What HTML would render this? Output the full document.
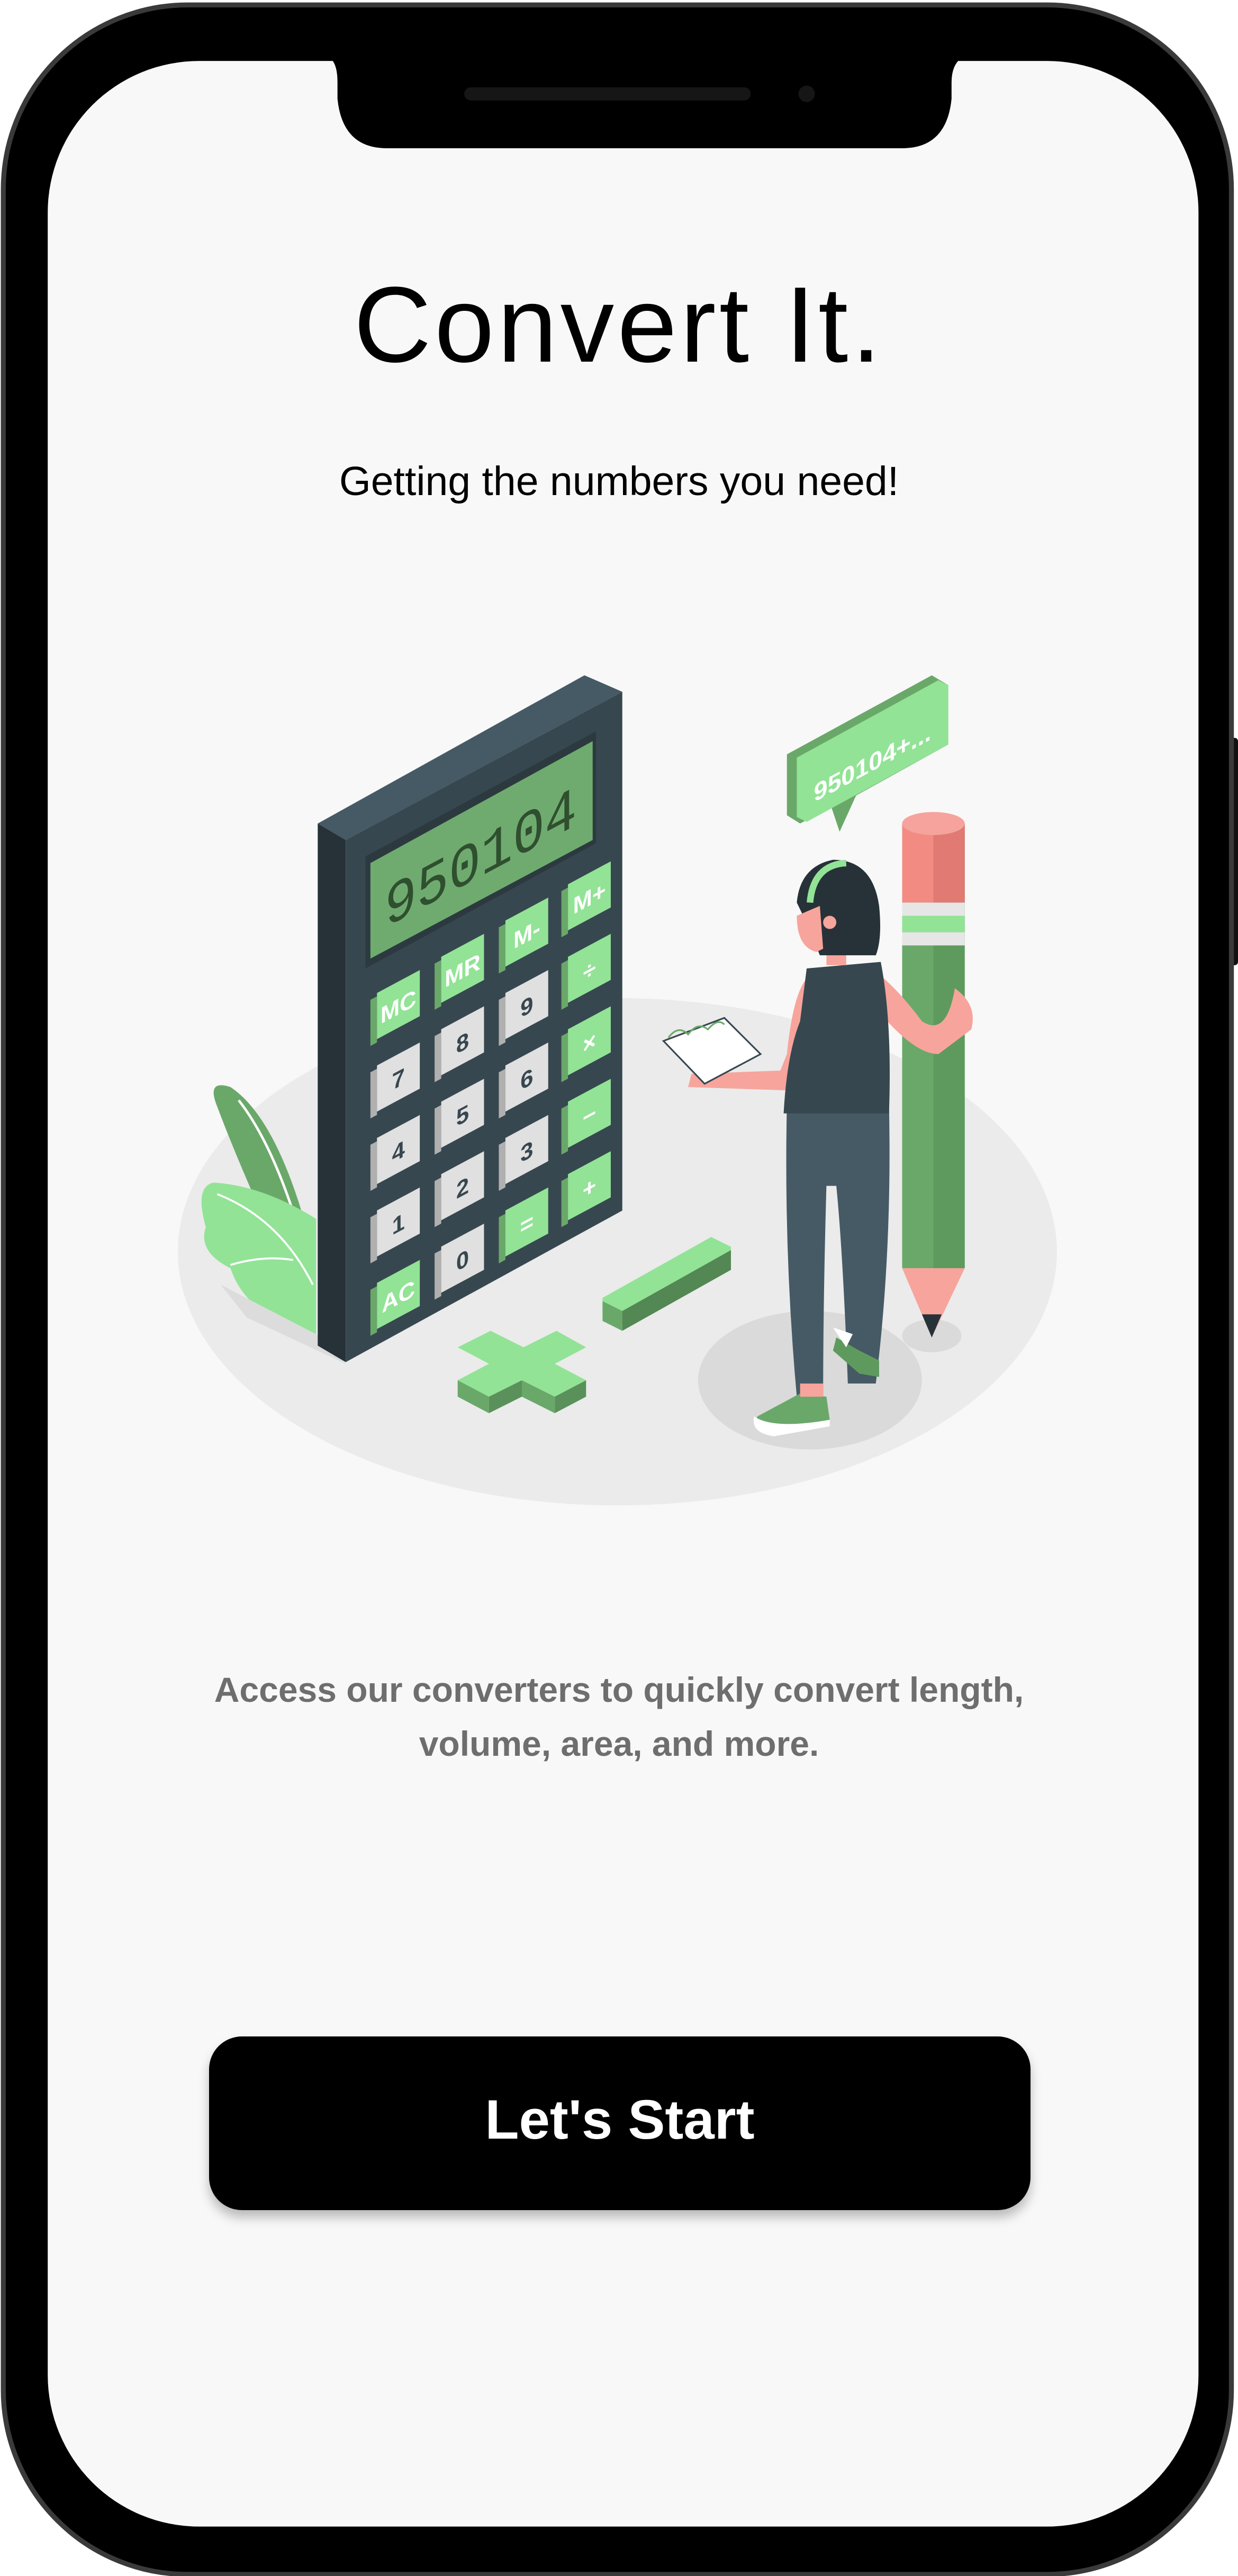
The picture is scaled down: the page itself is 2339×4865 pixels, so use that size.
<!DOCTYPE html>
<html><head><meta charset="utf-8"><style>
html,body{margin:0;padding:0;background:#fff;}
body{width:2339px;height:4865px;position:relative;overflow:hidden;font-family:"Liberation Sans",sans-serif;}
svg.bg{position:absolute;left:0;top:0;width:2339px;height:4865px;}
.t{position:absolute;left:0;width:2339px;text-align:center;line-height:1;white-space:nowrap;}
.btn{position:absolute;left:395px;top:3846px;width:1552px;height:328px;background:#000;border-radius:62px;box-shadow:0 14px 20px rgba(0,0,0,0.25);color:#fff;font-weight:bold;font-size:105px;text-align:center;line-height:316px;}
</style></head><body>
<svg class="bg" viewBox="0 0 752 1564" preserveAspectRatio="none" xmlns="http://www.w3.org/2000/svg">
  <rect x="746" y="448" width="6" height="138" rx="2" fill="#111"/>
  <rect x="2" y="3" width="746" height="1560" rx="112" fill="#000" stroke="#3a3a3a" stroke-width="3"/>
  <rect x="29" y="37" width="699" height="1497" rx="92" fill="#f8f8f8"/>
  <path d="M198 34 Q205 36 205 50 L205 60 Q208 90 235 90 L548 90 Q575 90 578 60 L578 50 Q578 38 586 34 Z" fill="#000"/>
  <rect x="282" y="53" width="174" height="8" rx="4" fill="#161616"/>
  <circle cx="490" cy="57" r="5" fill="#161616"/>

  <ellipse cx="375" cy="760" rx="267" ry="154" fill="#ebebeb"/>
  <ellipse cx="492" cy="838" rx="68" ry="42" fill="#dadada"/>
  <ellipse cx="566" cy="811" rx="18" ry="10" fill="#dadada"/>

  <path d="M190 760 Q170 680 140 660 Q125 655 132 672 Q150 720 188 800 Z" fill="#6aa86a"/>
  <path d="M145 668 Q170 700 188 770" stroke="#fff" stroke-width="1.5" fill="none"/>
  <path d="M192 810 Q150 800 140 770 Q120 760 125 745 Q118 720 130 718 Q160 720 192 740 Z" fill="#92e396"/>
  <path d="M132 725 Q170 740 190 780 M140 768 Q160 762 178 765" stroke="#fff" stroke-width="1.2" fill="none"/>
  <polygon points="134,780 192,810 210,828 150,800" fill="#dcdcdc"/>

  <polygon points="193,500 355,410 378,420 210,510" fill="#455a64"/>
  <polygon points="193,500 210,510 210,827 193,817" fill="#263238"/>
  <polygon points="210,510 378,420 378,735 210,827" fill="#37474f"/>
  <polygon points="222,520 362,444 362,512 222,588" fill="#2c3a40"/>
  <polygon points="225,524 360,450 360,510 225,582" fill="#6fab6f"/>
  <g transform="translate(292,520) skewY(-28.2)">
    <text x="0" y="12" font-family="Liberation Mono,monospace" font-size="36" fill="#2f4f2f" text-anchor="middle" transform="scale(0.9,1)">950104</text>
  </g>
  <g font-family="Liberation Sans,sans-serif" font-weight="bold" font-size="14" text-anchor="middle">
  <g transform="translate(240,612) skewY(-28.2)"><rect x="-15" y="-13" width="4" height="28" fill="#6aa86a"/><rect x="-11" y="-15" width="26" height="28" fill="#92e396"/><text x="2" y="5" fill="#fff">MC</text></g>
  <g transform="translate(240,656) skewY(-28.2)"><rect x="-15" y="-13" width="4" height="28" fill="#b0b0b0"/><rect x="-11" y="-15" width="26" height="28" fill="#e0e0e0"/><text x="2" y="5" fill="#37474f">7</text></g>
  <g transform="translate(240,700) skewY(-28.2)"><rect x="-15" y="-13" width="4" height="28" fill="#b0b0b0"/><rect x="-11" y="-15" width="26" height="28" fill="#e0e0e0"/><text x="2" y="5" fill="#37474f">4</text></g>
  <g transform="translate(240,744) skewY(-28.2)"><rect x="-15" y="-13" width="4" height="28" fill="#b0b0b0"/><rect x="-11" y="-15" width="26" height="28" fill="#e0e0e0"/><text x="2" y="5" fill="#37474f">1</text></g>
  <g transform="translate(240,788) skewY(-28.2)"><rect x="-15" y="-13" width="4" height="28" fill="#6aa86a"/><rect x="-11" y="-15" width="26" height="28" fill="#92e396"/><text x="2" y="5" fill="#fff">AC</text></g>
  <g transform="translate(279,590) skewY(-28.2)"><rect x="-15" y="-13" width="4" height="28" fill="#6aa86a"/><rect x="-11" y="-15" width="26" height="28" fill="#92e396"/><text x="2" y="5" fill="#fff">MR</text></g>
  <g transform="translate(279,634) skewY(-28.2)"><rect x="-15" y="-13" width="4" height="28" fill="#b0b0b0"/><rect x="-11" y="-15" width="26" height="28" fill="#e0e0e0"/><text x="2" y="5" fill="#37474f">8</text></g>
  <g transform="translate(279,678) skewY(-28.2)"><rect x="-15" y="-13" width="4" height="28" fill="#b0b0b0"/><rect x="-11" y="-15" width="26" height="28" fill="#e0e0e0"/><text x="2" y="5" fill="#37474f">5</text></g>
  <g transform="translate(279,722) skewY(-28.2)"><rect x="-15" y="-13" width="4" height="28" fill="#b0b0b0"/><rect x="-11" y="-15" width="26" height="28" fill="#e0e0e0"/><text x="2" y="5" fill="#37474f">2</text></g>
  <g transform="translate(279,766) skewY(-28.2)"><rect x="-15" y="-13" width="4" height="28" fill="#b0b0b0"/><rect x="-11" y="-15" width="26" height="28" fill="#e0e0e0"/><text x="2" y="5" fill="#37474f">0</text></g>
  <g transform="translate(318,568) skewY(-28.2)"><rect x="-15" y="-13" width="4" height="28" fill="#6aa86a"/><rect x="-11" y="-15" width="26" height="28" fill="#92e396"/><text x="2" y="5" fill="#fff">M-</text></g>
  <g transform="translate(318,612) skewY(-28.2)"><rect x="-15" y="-13" width="4" height="28" fill="#b0b0b0"/><rect x="-11" y="-15" width="26" height="28" fill="#e0e0e0"/><text x="2" y="5" fill="#37474f">9</text></g>
  <g transform="translate(318,656) skewY(-28.2)"><rect x="-15" y="-13" width="4" height="28" fill="#b0b0b0"/><rect x="-11" y="-15" width="26" height="28" fill="#e0e0e0"/><text x="2" y="5" fill="#37474f">6</text></g>
  <g transform="translate(318,700) skewY(-28.2)"><rect x="-15" y="-13" width="4" height="28" fill="#b0b0b0"/><rect x="-11" y="-15" width="26" height="28" fill="#e0e0e0"/><text x="2" y="5" fill="#37474f">3</text></g>
  <g transform="translate(318,744) skewY(-28.2)"><rect x="-15" y="-13" width="4" height="28" fill="#6aa86a"/><rect x="-11" y="-15" width="26" height="28" fill="#92e396"/><text x="2" y="5" fill="#fff">=</text></g>
  <g transform="translate(356,546) skewY(-28.2)"><rect x="-15" y="-13" width="4" height="28" fill="#6aa86a"/><rect x="-11" y="-15" width="26" height="28" fill="#92e396"/><text x="2" y="5" fill="#fff">M+</text></g>
  <g transform="translate(356,590) skewY(-28.2)"><rect x="-15" y="-13" width="4" height="28" fill="#6aa86a"/><rect x="-11" y="-15" width="26" height="28" fill="#92e396"/><text x="2" y="5" fill="#fff">÷</text></g>
  <g transform="translate(356,634) skewY(-28.2)"><rect x="-15" y="-13" width="4" height="28" fill="#6aa86a"/><rect x="-11" y="-15" width="26" height="28" fill="#92e396"/><text x="2" y="5" fill="#fff">×</text></g>
  <g transform="translate(356,678) skewY(-28.2)"><rect x="-15" y="-13" width="4" height="28" fill="#6aa86a"/><rect x="-11" y="-15" width="26" height="28" fill="#92e396"/><text x="2" y="5" fill="#fff">−</text></g>
  <g transform="translate(356,722) skewY(-28.2)"><rect x="-15" y="-13" width="4" height="28" fill="#6aa86a"/><rect x="-11" y="-15" width="26" height="28" fill="#92e396"/><text x="2" y="5" fill="#fff">+</text></g>
  </g>

  <polygon points="278,818 298,808 318,818 338,808 356,818 337,828 356,838 337,848 317,838 297,848 278,838 297,828" fill="#92e396"/>
  <polygon points="278,838 297,848 297,858 278,848" fill="#6aa86a"/>
  <polygon points="297,848 317,838 317,848 297,858" fill="#5a905a"/>
  <polygon points="317,838 337,848 337,858 317,848" fill="#6aa86a"/>
  <polygon points="337,848 356,838 356,848 337,858" fill="#5a905a"/>
  <polygon points="366,788 432,751 444,757 444,767 378,804 366,798" fill="#92e396"/>
  <polygon points="366,790 378,796 378,808 366,802" fill="#6aa86a"/>
  <polygon points="378,796 444,759 444,771 378,808" fill="#538753"/>

  <rect x="548" y="500" width="38" height="270" fill="#6aa86a"/>
  <rect x="567" y="500" width="19" height="270" fill="#5e9a5e"/>
  <rect x="548" y="500" width="38" height="48" fill="#f28b82"/>
  <rect x="567" y="500" width="19" height="48" fill="#e07a72"/>
  <ellipse cx="567" cy="500" rx="19" ry="7" fill="#f5a39c"/>
  <rect x="548" y="548" width="38" height="8" fill="#e6e6e6"/>
  <rect x="548" y="556" width="38" height="10" fill="#92e396"/>
  <rect x="548" y="566" width="38" height="8" fill="#e6e6e6"/>
  <polygon points="548,770 586,770 566,812" fill="#f7a49c"/>
  <polygon points="560,798 572,798 566,812" fill="#263238"/>

  <polygon points="478,458 566,410 576,416 576,452 520,483 510,505 505,490 486,500 478,495" fill="#6aa86a"/>
  <polygon points="484,460 570,413 576,416 576,452 490,499 484,496" fill="#92e396"/>
  <g transform="translate(530,462) skewY(-28.2)"><text x="0" y="6" font-family="Liberation Sans,sans-serif" font-weight="bold" font-size="15" fill="#fff" text-anchor="middle">950104+...</text></g>

  <path d="M478 670 L540 670 Q542 760 532 840 L515 840 Q512 760 508 720 L502 720 Q500 790 500 848 L484 848 Q476 760 478 670 Z" fill="#455a64"/>
  <path d="M508 812 L522 820 L534 826 L534 836 L522 834 L506 820 Z" fill="#5e9a5e"/>
  <path d="M506 806 L518 810 L514 818 Z" fill="#fff"/>
  <path d="M486 846 L502 848 L504 862 L470 870 Q458 868 460 860 Z" fill="#6aa86a"/>
  <path d="M458 860 Q470 868 504 862 L504 866 L470 872 Q456 870 458 860 Z" fill="#fff"/>
  <rect x="486" y="840" width="14" height="8" fill="#f7a49c"/>
  <path d="M492 592 Q482 600 478 640 L474 650 L420 652 L418 660 L478 662 Q492 652 496 605 Z" fill="#f7a49c"/>
  <path d="M532 590 Q545 600 560 620 Q575 630 580 600 Q594 610 590 625 L570 640 Q555 640 532 612 Z" fill="#f7a49c"/>
  <polygon points="403,632 440,618 462,640 428,658" fill="#fff" stroke="#37474f" stroke-width="1"/>
  <path d="M406 630 Q412 622 418 628 Q424 620 430 625 Q436 618 440 622" stroke="#6aa86a" stroke-width="1" fill="none"/>
  <path d="M490 588 L535 584 Q542 620 540 676 L476 676 Q478 640 486 620 Z" fill="#37474f"/>
  <rect x="502" y="570" width="12" height="16" fill="#f7a49c"/>
  <path d="M484 548 Q486 526 506 522 Q530 522 534 550 Q536 570 532 580 L498 580 Q490 560 484 548 Z" fill="#263238"/>
  <path d="M484 556 Q484 575 496 578 L500 576 L498 550 Z" fill="#f7a49c"/>
  <path d="M492 548 Q494 525 514 524" stroke="#92e396" stroke-width="4" fill="none"/>
  <circle cx="504" cy="560" r="4" fill="#f7a49c"/>
</svg>

<div class="t" style="top:512px;font-size:203px;letter-spacing:6px;color:#000;">Convert It.</div>
<div class="t" style="top:871px;font-size:77px;color:#000;">Getting the numbers you need!</div>
<div class="t" style="top:3140px;font-size:66px;line-height:102px;color:#6e6e6e;font-weight:bold;">Access our converters to quickly convert length,<br>volume, area, and more.</div>
<div class="btn">Let's Start</div>
</body></html>
